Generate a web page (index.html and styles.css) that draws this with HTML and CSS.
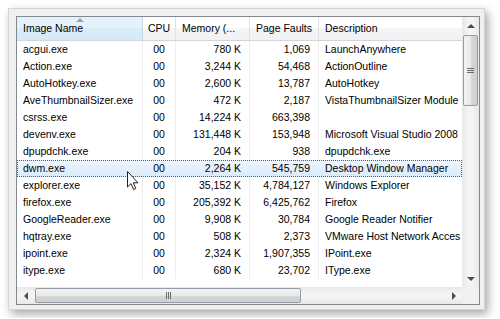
FILE: index.html
```html
<!DOCTYPE html>
<html lang="en">
<head>
    <meta charset="UTF-8">
    <title>Processes</title>
    <link rel="stylesheet" href="styles.css">
</head>
<body>
    <div class="window">
        <div class="listview">
            <div class="viewport">
                <div class="row header">
                    <div class="col sorted">Image Name<span class="sort-arrow"></span></div>
                    <div class="col center">CPU</div>
                    <div class="col">Memory (...</div>
                    <div class="col">Page Faults</div>
                    <div class="col">Description</div>
                </div>
                <div class="row"><div class="col">acgui.exe</div><div class="col center">00</div><div class="col num">780 K</div><div class="col num">1,069</div><div class="col">LaunchAnywhere</div></div>
                <div class="row"><div class="col">Action.exe</div><div class="col center">00</div><div class="col num">3,244 K</div><div class="col num">54,468</div><div class="col">ActionOutline</div></div>
                <div class="row"><div class="col">AutoHotkey.exe</div><div class="col center">00</div><div class="col num">2,600 K</div><div class="col num">13,787</div><div class="col">AutoHotkey</div></div>
                <div class="row"><div class="col">AveThumbnailSizer.exe</div><div class="col center">00</div><div class="col num">472 K</div><div class="col num">2,187</div><div class="col">VistaThumbnailSizer Module</div></div>
                <div class="row"><div class="col">csrss.exe</div><div class="col center">00</div><div class="col num">14,224 K</div><div class="col num">663,398</div><div class="col"></div></div>
                <div class="row"><div class="col">devenv.exe</div><div class="col center">00</div><div class="col num">131,448 K</div><div class="col num">153,948</div><div class="col">Microsoft Visual Studio 2008</div></div>
                <div class="row"><div class="col">dpupdchk.exe</div><div class="col center">00</div><div class="col num">204 K</div><div class="col num">938</div><div class="col">dpupdchk.exe</div></div>
                <div class="row selected"><div class="col">dwm.exe</div><div class="col center">00</div><div class="col num">2,264 K</div><div class="col num">545,759</div><div class="col">Desktop Window Manager</div></div>
                <div class="row"><div class="col">explorer.exe</div><div class="col center">00</div><div class="col num">35,152 K</div><div class="col num">4,784,127</div><div class="col">Windows Explorer</div></div>
                <div class="row"><div class="col">firefox.exe</div><div class="col center">00</div><div class="col num">205,392 K</div><div class="col num">6,425,762</div><div class="col">Firefox</div></div>
                <div class="row"><div class="col">GoogleReader.exe</div><div class="col center">00</div><div class="col num">9,908 K</div><div class="col num">30,784</div><div class="col">Google Reader Notifier</div></div>
                <div class="row"><div class="col">hqtray.exe</div><div class="col center">00</div><div class="col num">508 K</div><div class="col num">2,373</div><div class="col">VMware Host Network Acces</div></div>
                <div class="row"><div class="col">ipoint.exe</div><div class="col center">00</div><div class="col num">2,324 K</div><div class="col num">1,907,355</div><div class="col">IPoint.exe</div></div>
                <div class="row"><div class="col">itype.exe</div><div class="col center">00</div><div class="col num">680 K</div><div class="col num">23,702</div><div class="col">IType.exe</div></div>
            </div>

            <div class="vscroll">
                <div class="btn"><span class="arrow up"></span></div>
                <div class="track">
                    <div class="thumb"><span class="grip"></span></div>
                </div>
                <div class="btn"><span class="arrow down"></span></div>
            </div>

            <div class="hscroll">
                <div class="btn"><span class="arrow left"></span></div>
                <div class="track">
                    <div class="thumb"><span class="grip"></span></div>
                </div>
                <div class="btn"><span class="arrow right"></span></div>
            </div>

            <div class="corner"></div>
        </div>
    </div>

    <svg class="cursor" width="13" height="20" viewBox="0 0 13 20">
        <path d="M0.5 0.5 L0.5 16 L4 12.6 L6.6 18.6 L8.8 17.6 L6.3 11.8 L11 11.8 Z" fill="#fff" stroke="#222" stroke-width="1"/>
    </svg>
</body>
</html>
```

FILE: styles.css
```css
body {
    margin: 0;
    background: #fff;
    font-family: "Liberation Sans", Arial, sans-serif;
    font-size: 10.5px;
    color: #000;
}
.window {
    margin: 8px;
    padding: 7px 5px 5px 7px;
    box-sizing: border-box;
    width: 477px;
    height: 302px;
    background: #f0f0f0;
    border: 1px solid #d4d4d4;
    box-shadow: 3px 4px 9px rgba(0,0,0,0.35);
}
.listview {
    display: grid;
    grid-template-columns: 1fr 17px;
    grid-template-rows: 1fr 17px;
    width: 464px;
    height: 289px;
    box-sizing: border-box;
    border: 1px solid #828790;
    background: #fff;
}
.viewport {
    overflow: hidden;
    min-width: 0;
}
.row {
    display: grid;
    grid-template-columns: 126px 33px 74px 69px 220px;
    height: 17px;
    line-height: 17px;
    position: relative;
}
.col {
    padding: 0 6px;
    border-right: 1px solid #ededed;
    white-space: nowrap;
    overflow: hidden;
}
.col.num {
    text-align: right;
    padding-right: 8px;
}
.col.center {
    text-align: center;
    padding: 0;
}
.header {
    height: 24px;
    line-height: 23px;
    background: linear-gradient(#fff 0, #fff 50%, #f4f5f7 50%, #f1f2f4 100%);
    border-bottom: 1px solid #d5d5d5;
    box-sizing: border-box;
}
.header .col {
    border-right: 1px solid #dfe1e5;
    position: relative;
}
.header .sorted {
    background: linear-gradient(#e4f2fb 0, #e4f2fb 50%, #d9edf9 50%, #d4eaf8 100%);
    border-right-color: #c0d7e6;
}
.sort-arrow {
    position: absolute;
    left: 59px;
    top: 1px;
    width: 0;
    height: 0;
    border-left: 4px solid transparent;
    border-right: 4px solid transparent;
    border-bottom: 4px solid #9aa4ad;
}
.selected {
    background: linear-gradient(#eef6fd, #d9ebf9);
    outline: 1px dotted #4a6178;
    outline-offset: -1px;
}
.selected .col {
    border-right-color: transparent;
}

.vscroll, .hscroll {
    display: flex;
    background: linear-gradient(90deg, #e8e8e8, #f4f4f4 40%, #f4f4f4 60%, #e8e8e8);
}
.vscroll {
    flex-direction: column;
}
.hscroll {
    background: linear-gradient(#e8e8e8, #f4f4f4 40%, #f4f4f4 60%, #e8e8e8);
}
.btn {
    flex: 0 0 17px;
    display: flex;
    align-items: center;
    justify-content: center;
}
.track {
    flex: 1;
    display: flex;
    padding: 1px 0;
}
.hscroll .track {
    padding: 0 1px;
}
.thumb {
    box-sizing: border-box;
    border: 1px solid #959ca3;
    border-radius: 2px;
    display: flex;
    align-items: center;
    justify-content: center;
}
.vscroll .thumb {
    width: 15px;
    height: 71px;
    margin-left: 1px;
    background: linear-gradient(90deg, #f3f3f3, #e9e9e9 50%, #d8d8d8 51%, #cfcfcf);
}
.hscroll .thumb {
    width: 266px;
    height: 15px;
    margin-top: 1px;
    background: linear-gradient(#f3f3f3, #e9e9e9 50%, #d8d8d8 51%, #cfcfcf);
}
.vscroll .grip {
    width: 7px;
    height: 5px;
    background: repeating-linear-gradient(#6c6c6c 0, #6c6c6c 1px, transparent 1px, transparent 2px);
}
.hscroll .grip {
    width: 5px;
    height: 7px;
    background: repeating-linear-gradient(90deg, #6c6c6c 0, #6c6c6c 1px, transparent 1px, transparent 2px);
}
.arrow {
    width: 0;
    height: 0;
}
.arrow.up {
    border-left: 4px solid transparent;
    border-right: 4px solid transparent;
    border-bottom: 4px solid #4d4d4d;
}
.arrow.down {
    border-left: 4px solid transparent;
    border-right: 4px solid transparent;
    border-top: 4px solid #4d4d4d;
}
.arrow.left {
    border-top: 4px solid transparent;
    border-bottom: 4px solid transparent;
    border-right: 4px solid #4d4d4d;
}
.arrow.right {
    border-top: 4px solid transparent;
    border-bottom: 4px solid transparent;
    border-left: 4px solid #4d4d4d;
}
.corner {
    background: #f0f0f0;
}
.cursor {
    position: absolute;
    left: 127px;
    top: 171px;
}
```
